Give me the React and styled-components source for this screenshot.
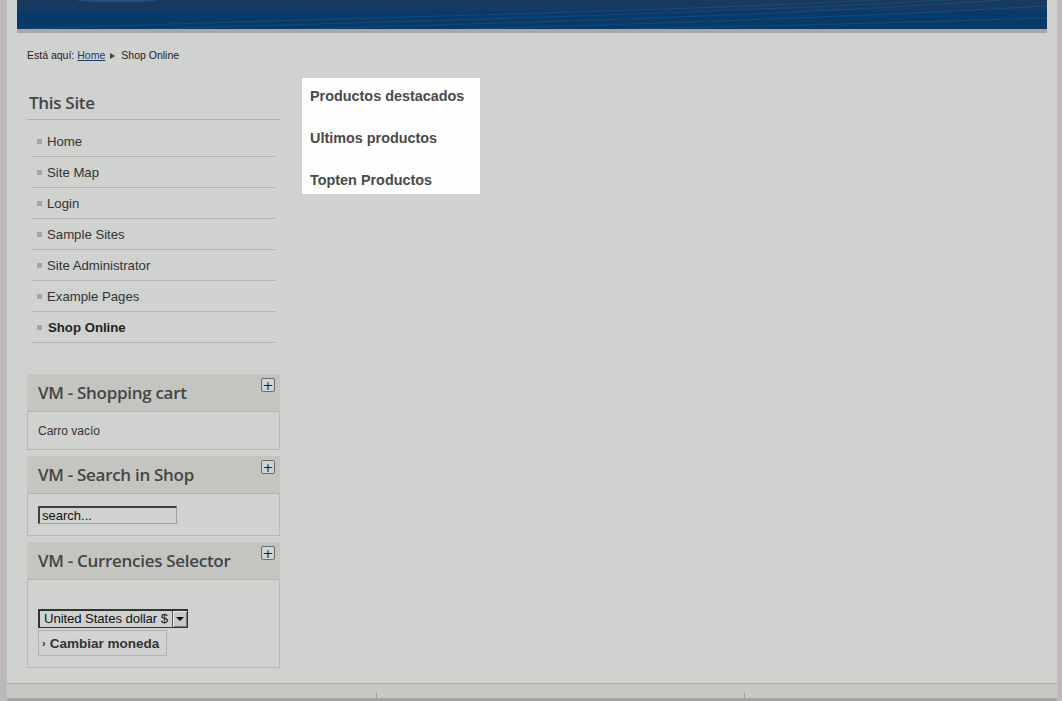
import React from "react";
import styled, { createGlobalStyle } from "styled-components";

const Global = createGlobalStyle`
  html, body { margin: 0; padding: 0; }
  body {
    background: #bdb8b9;
    font-family: "Liberation Sans", Arial, sans-serif;
    color: #333;
  }
  #root { min-height: 701px; }
`;

const Page = styled.div`
  margin-left: 7px;
  width: 1050px;
  min-height: 701px;
  background: #d0d2cf;
  display: flex;
  flex-direction: column;
`;

const Header = styled.header`
  margin: 0 10px;
  height: 29px;
  border-bottom: 4px solid #a7a9a6;
  background: linear-gradient(180deg, #193a5e 0px, #173a60 10px, #073a69 11px, #053a6a 29px);
  overflow: hidden;
  svg { display: block; }
`;

const Breadcrumb = styled.div`
  padding: 14px 20px 0;
  height: 17px;
  font-size: 10.5px;
  line-height: 17px;
  color: #222;
  display: flex;
  align-items: center;
  gap: 3px;
  a { color: #1e3c74; text-decoration: underline; }
`;

const Arrow = styled.span`
  display: inline-block;
  width: 0;
  height: 0;
  margin: 0 3px 0 2px;
  border-top: 3.5px solid transparent;
  border-bottom: 3.5px solid transparent;
  border-left: 5px solid #444;
`;

const Columns = styled.div`
  display: flex;
  gap: 22px;
  padding: 14px 20px 0;
  align-items: flex-start;
`;

const Sidebar = styled.aside`
  width: 253px;
  display: flex;
  flex-direction: column;
`;

const SiteTitle = styled.h3`
  margin: 12px 0 0;
  padding-left: 2px;
  height: 29px;
  line-height: 25px;
  font-family: "Open Sans", sans-serif;
  font-weight: 600;
  font-size: 17px;
  letter-spacing: -0.3px;
  color: #454545;
  border-bottom: 1px solid #b0b1ae;
`;

const Menu = styled.ul`
  list-style: none;
  margin: 0 5px 31px;
  padding: 6px 0 0;
`;

const MenuItem = styled.li`
  height: 30px;
  border-bottom: 1px solid #b1b3b0;
  display: flex;
  align-items: center;
  padding-left: 5px;
  font-size: 13.2px;
  color: ${(p) => (p.$active ? "#222" : "#333")};
  font-weight: ${(p) => (p.$active ? "bold" : "normal")};
  &::before {
    content: "";
    width: 5px;
    height: 5px;
    background: #a3a5a2;
    margin-right: ${(p) => (p.$active ? "6px" : "5px")};
  }
`;

const Module = styled.section`
  & + & { margin-top: 6px; }
`;

const ModuleHead = styled.div`
  height: 37px;
  background: #c4c5c1;
  border-bottom: 1px solid #b4b5b1;
  display: flex;
  justify-content: space-between;
`;

const ModuleTitle = styled.h3`
  margin: 0;
  padding-left: 11px;
  line-height: 37px;
  font-family: "Open Sans", sans-serif;
  font-weight: 600;
  font-size: 17px;
  letter-spacing: -0.3px;
  color: #454545;
`;

const Toggle = styled.span`
  margin: 4px 5px 0 0;
  width: 12px;
  height: 12px;
  border: 1px solid #6a6a6a;
  border-radius: 2px;
  background: #d4d5d1;
  display: flex;
  align-items: center;
  justify-content: center;
  font-size: 13px;
  line-height: 1;
  color: #222;
  font-family: "DejaVu Sans", sans-serif;
`;

const ModuleBody = styled.div`
  border: 1px solid #b7b8b5;
  border-top: none;
  padding: ${(p) => p.$pad || "0 10px"};
  font-size: 12px;
  color: #333;
`;

const BodyText = styled.div`
  padding-top: 2px;
  line-height: 35px;
`;

const SearchInput = styled.input`
  box-sizing: border-box;
  width: 139px;
  height: 18px;
  margin: 0;
  padding: 0 2px;
  border-style: solid;
  border-width: 2px 1px 1px 2px;
  border-color: #404040 #a2a39f #a2a39f #404040;
  background: #d0d2cf;
  font-family: "Liberation Sans", Arial, sans-serif;
  font-size: 13px;
  color: #111;
  outline: none;
`;

const SelectBox = styled.div`
  display: flex;
  width: 150px;
  height: 19px;
  box-sizing: border-box;
  border: 1px solid #333;
  border-width: 2px 1px 1px 2px;
  background: #d0d2cf;
`;

const SelectText = styled.div`
  flex: 1;
  overflow: hidden;
  white-space: nowrap;
  font-size: 13.2px;
  letter-spacing: -0.1px;
  line-height: 16px;
  padding-left: 4px;
  color: #111;
`;

const SelectArrow = styled.div`
  width: 14px;
  flex: none;
  background: #c8c8c4;
  border-left: 1px solid #555;
  box-shadow: inset 1px 1px 0 #eee, inset -1px -1px 0 #777;
  display: flex;
  align-items: center;
  justify-content: center;
  &::after {
    content: "";
    border-left: 4px solid transparent;
    border-right: 4px solid transparent;
    border-top: 4px solid #111;
  }
`;

const Button = styled.button`
  margin-top: 2px;
  height: 26px;
  width: 129px;
  padding: 0 0 0 3px;
  border: 1px solid #b4b5b2;
  background: linear-gradient(180deg, #d4d5d2, #cfd0cd);
  font-family: "Liberation Sans", Arial, sans-serif;
  font-weight: bold;
  font-size: 13.5px;
  color: #333;
  display: flex;
  align-items: center;
  gap: 4px;
  text-align: left;
`;

const Chev = styled.span`
  font-size: 11px;
  font-weight: bold;
`;

const Main = styled.main`
  flex: 1;
`;

const Featured = styled.ul`
  list-style: none;
  margin: 0;
  padding: 10px 8px 6px;
  width: 162px;
  background: #fefefe;
`;

const FeaturedItem = styled.li`
  font-weight: bold;
  font-size: 14.4px;
  line-height: 16px;
  color: #4a4a4a;
  white-space: nowrap;
  & + & { margin-top: 26px; }
`;

const Footer = styled.footer`
  margin-top: 15px;
  border-top: 1px solid #adafab;
  height: 14px;
  background: #c8c9c5;
  border-bottom: 3px solid #a3a59e;
  display: flex;
  align-items: flex-end;
`;

const FooterCol = styled.div`
  width: ${(p) => p.$w}px;
  height: 5px;
  & + & { border-left: 1px solid #9c9e9a; }
`;

const Waves = () => (
  <svg width="1030" height="29" viewBox="0 0 1030 29">
    <ellipse cx="100" cy="0" rx="40" ry="2" fill="#3d6a94" opacity="0.5" />
    <g fill="none" stroke="#2f5f8f" strokeWidth="1" opacity="0.4">
      <path d="M-20 30 C 300 18, 650 12, 900 -2" />
      <path d="M100 30 C 420 20, 700 14, 960 -2" />
      <path d="M250 30 C 520 22, 760 16, 1000 -1" />
      <path d="M420 30 C 620 24, 820 18, 1030 6" />
      <path d="M600 29 C 760 26, 900 22, 1030 18" />
    </g>
  </svg>
);

const menu = [
  "Home",
  "Site Map",
  "Login",
  "Sample Sites",
  "Site Administrator",
  "Example Pages",
  "Shop Online",
];

export default function App() {
  return (
    <>
      <Global />
      <Page>
        <Header>
          <Waves />
        </Header>
        <Breadcrumb>
          <span>Está aquí:</span>
          <a href="#">Home</a>
          <Arrow />
          <span>Shop Online</span>
        </Breadcrumb>
        <Columns>
          <Sidebar>
            <SiteTitle>This Site</SiteTitle>
            <Menu>
              {menu.map((m) => (
                <MenuItem key={m} $active={m === "Shop Online"}>
                  {m}
                </MenuItem>
              ))}
            </Menu>
            <Module>
              <ModuleHead>
                <ModuleTitle>VM - Shopping cart</ModuleTitle>
                <Toggle>+</Toggle>
              </ModuleHead>
              <ModuleBody>
                <BodyText>Carro vacío</BodyText>
              </ModuleBody>
            </Module>
            <Module>
              <ModuleHead>
                <ModuleTitle>VM - Search in Shop</ModuleTitle>
                <Toggle>+</Toggle>
              </ModuleHead>
              <ModuleBody $pad="12px 10px 11px">
                <SearchInput defaultValue="search..." />
              </ModuleBody>
            </Module>
            <Module>
              <ModuleHead>
                <ModuleTitle>VM - Currencies Selector</ModuleTitle>
                <Toggle>+</Toggle>
              </ModuleHead>
              <ModuleBody $pad="29px 10px 11px">
                <SelectBox>
                  <SelectText>United States dollar $</SelectText>
                  <SelectArrow />
                </SelectBox>
                <Button>
                  <Chev>›</Chev>Cambiar moneda
                </Button>
              </ModuleBody>
            </Module>
          </Sidebar>
          <Main>
            <Featured>
              <FeaturedItem>Productos destacados</FeaturedItem>
              <FeaturedItem>Ultimos productos</FeaturedItem>
              <FeaturedItem>Topten Productos</FeaturedItem>
            </Featured>
          </Main>
        </Columns>
        <Footer>
          <FooterCol $w={369} />
          <FooterCol $w={368} />
          <FooterCol $w={312} />
        </Footer>
      </Page>
    </>
  );
}
